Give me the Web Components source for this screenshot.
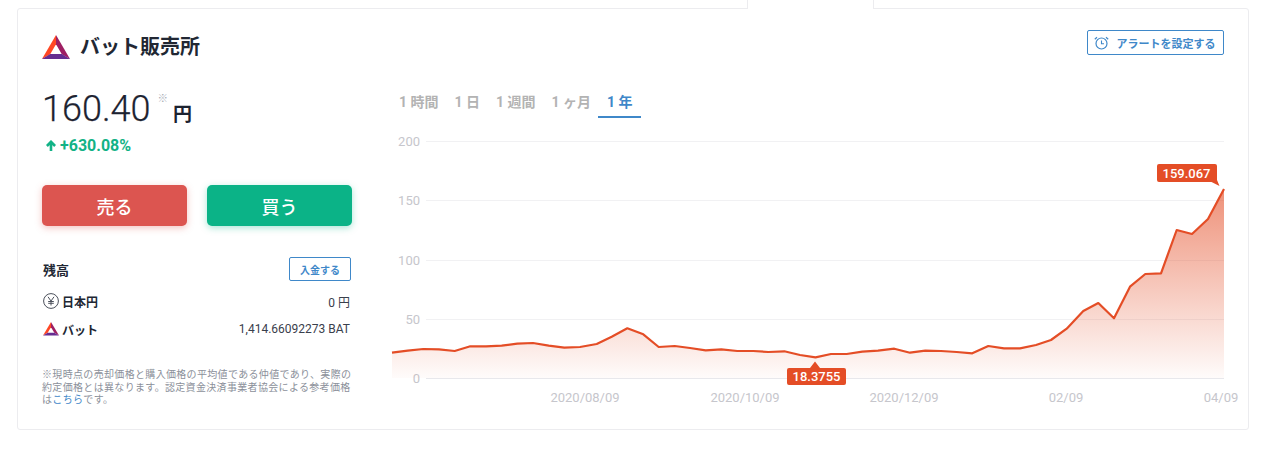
<!DOCTYPE html>
<html lang="ja">
<head>
<meta charset="utf-8">
<title>バット販売所</title>
<style>
  html, body { margin: 0; background: #fff; overflow: hidden; }
  body { font-family: Roboto, "Noto Sans CJK JP", sans-serif; color: #212733; }
</style>
</head>
<body>
<exchange-page>
  <trade-card></trade-card>
</exchange-page>

<script>
const BAT_LOGO = `
  <polygon points="14,0 0,23.6 8.2,19 14,9" fill="#ff4724"/>
  <polygon points="14,0 28,23.6 19.8,19 14,9" fill="#9e1f63"/>
  <polygon points="0,23.6 28,23.6 19.8,18.6 8.2,18.6" fill="#662d91"/>`;

class BatLogo extends HTMLElement {
  constructor() {
    super();
    this.attachShadow({mode: 'open'}).innerHTML = `
      <style>
        :host { display: block; width: var(--logo-width, 28px); height: var(--logo-height, 24px); flex: none; }
        svg { display: block; width: 100%; height: 100%; }
      </style>
      <svg viewBox="0 0 28 23.6" preserveAspectRatio="none">${BAT_LOGO}</svg>`;
  }
}

class OutlineButton extends HTMLElement {
  constructor() {
    super();
    this.attachShadow({mode: 'open'}).innerHTML = `
      <style>
        :host {
          display: flex;
          align-items: center;
          justify-content: center;
          gap: 8px;
          box-sizing: border-box;
          border: 1px solid #3f88c9;
          border-radius: 2px;
          color: #3f88c9;
          font-size: var(--button-font, 10px);
          font-weight: 700;
          background: #fff;
        }
      </style>
      <slot name="icon"></slot>
      <slot></slot>`;
  }
}

class TradeButton extends HTMLElement {
  constructor() {
    super();
    this.attachShadow({mode: 'open'}).innerHTML = `
      <style>
        :host {
          display: flex;
          align-items: center;
          justify-content: center;
          width: 145px;
          height: 41px;
          border-radius: 5px;
          color: #fff;
          font-size: 18px;
          font-weight: 500;
          background: var(--button-color);
          box-shadow: 0 2px 7px var(--button-shadow);
        }
      </style>
      <slot></slot>`;
  }
}

class BalanceRow extends HTMLElement {
  constructor() {
    super();
    this.attachShadow({mode: 'open'}).innerHTML = `
      <style>
        :host {
          display: flex;
          align-items: center;
          height: 28px;
          padding: 0 2px 0 1px;
          font-size: 12px;
        }
        .name { display: flex; align-items: center; gap: 3px; font-weight: 700; }
        .value { margin-left: auto; color: #3a404c; }
      </style>
      <span class="name"><slot name="icon"></slot><slot name="name"></slot></span>
      <span class="value"><slot name="value"></slot></span>`;
  }
}

class RangeTabs extends HTMLElement {
  constructor() {
    super();
    const items = ['1 時間', '1 日', '1 週間', '1 ヶ月', '1 年'];
    this.attachShadow({mode: 'open'}).innerHTML = `
      <style>
        :host { display: flex; height: 32px; margin-left: -.5px; font-size: 14px; font-weight: 700; color: #b3b3b3; }
        span { box-sizing: border-box; height: 32px; padding: 5px 8.5px 0; white-space: pre; margin-right: -1px; }
        .active { color: #3f88c9; border-bottom: 2px solid #3f88c9; margin-left: -.5px; padding: 5px 8px 0 9px; }
      </style>
      ${items.map((item, i) => `<span class="${i === items.length - 1 ? 'active' : ''}">${item}</span>`).join('')}`;
  }
}

class PriceChart extends HTMLElement {
  constructor() {
    super();
    const points = [
      [392,352.7],[407.7,350.7],[423.3,349],[439,349.3],[454.7,351],[470.3,346.3],[486,346.3],[501.7,345.7],
      [517.3,343.7],[533,343],[548.7,345.7],[564.3,347.7],[580,347],[596.7,344],[611.7,336.7],[627.3,328.3],
      [643.3,334.3],[658.7,347],[674.7,346],[690,348],[705.7,350.3],[721.3,349.3],[737.3,351],[753.3,351],
      [768.3,352],[784.3,351.3],[800,355],[815.5,357.3],[831,354],[846.7,354],[862.3,351.7],[878,350.7],
      [894.3,348.7],[910,352.7],[925.3,350.7],[941,351],[956.7,352],[972.3,353.3],[988.3,346],[1004,348.3],
      [1020,348.3],[1036,345],[1051,340],[1066.7,328.7],[1083.3,311],[1098.3,303],[1114,318.3],[1130,286.7],
      [1145.3,274],[1161,273.3],[1176.7,230],[1192,234],[1208,219],[1224,189]
    ];
    const line = points.map(p => p.join(',')).join(' ');
    const grid = [[200,141.5],[150,200.5],[100,260.5],[50,319.5],[0,378.5]];
    const dates = [['2020/08/09',585],['2020/10/09',745],['2020/12/09',904],['02/09',1066],['04/09',1221]];

    this.attachShadow({mode: 'open'}).innerHTML = `
      <style>
        :host { display: block; width: 833px; height: 285px; margin-top: 7px; }
        svg { display: block; overflow: visible; font-family: Roboto, sans-serif; }
        .tick { font-size: 13px; fill: #c6c6cc; }
        .callout { font-size: 13px; font-weight: 500; fill: #fff; }
      </style>
      <svg width="833" height="285" viewBox="391 125 833 285">
        <defs>
          <linearGradient id="area" x1="0" y1="189" x2="0" y2="378" gradientUnits="userSpaceOnUse">
            <stop offset="0" stop-color="#e44d26" stop-opacity=".62"/>
            <stop offset="1" stop-color="#e44d26" stop-opacity=".02"/>
          </linearGradient>
        </defs>
        ${grid.map(([label, y]) => `
          <line x1="426" x2="1224" y1="${y}" y2="${y}" stroke="${label === 0 ? '#e8e8ec' : '#f1f1f3'}"/>
          <text class="tick" x="420" y="${y + 4.5}" text-anchor="end">${label}</text>`).join('')}
        <polygon points="392,378 ${line} 1224,378" fill="url(#area)"/>
        <polyline points="${line}" fill="none" stroke="#e44d26" stroke-width="2.2" stroke-linejoin="round"/>
        ${dates.map(([label, x]) => `<text class="tick" x="${x}" y="402" text-anchor="middle">${label}</text>`).join('')}

        <path d="M1159 164h56a2 2 0 0 1 2 2v14l2.5 6-8-4h-52.500a2 2 0 0 1-2-2v-14a2 2 0 0 1 2-2z" fill="#e44d26"/>
        <text class="callout" x="1186.500" y="177.500" text-anchor="middle">159.067</text>

        <path d="M789 368h21l5-6.500 5 6.500h24a2 2 0 0 1 2 2v13a2 2 0 0 1-2 2h-55a2 2 0 0 1-2-2v-13a2 2 0 0 1 2-2z" fill="#e44d26"/>
        <text class="callout" x="816.500" y="381" text-anchor="middle">18.3755</text>
      </svg>`;
  }
}

class TradeCard extends HTMLElement {
  constructor() {
    super();
    this.attachShadow({mode: 'open'}).innerHTML = `
      <style>
        :host {
          display: block;
          box-sizing: border-box;
          width: 1232px;
          height: 422px;
          margin-left: 17px;
          padding: 21px 24px 0;
          border: 1px solid #ececef;
          border-radius: 3px;
          background: #fff;
        }
        .head { display: flex; align-items: center; height: 34px; }
        .head bat-logo { margin-top: -1px; }
        .head h1 { margin: 0 0 0 10px; font-size: 20px; font-weight: 700; color: #212733; line-height: 34px; }
        .head outline-button { --button-font: 11px; margin-left: auto; width: 137px; height: 25px; margin-top: -9px; padding-right: 2px; }
        .body { display: flex; margin-top: 22px; }
        .left { width: 310px; flex: none; }
        .right { margin-left: 39px; }
        .price { display: flex; align-items: baseline; height: 50px; margin-top: -2px; font-size: 36px; font-weight: 300; line-height: 50px; color: #1c2230; -webkit-text-stroke: .25px #1c2230; }
        .price sup { align-self: flex-start; margin: 1px 0 0 7px; font-size: 10.500px; line-height: 28px; font-weight: 400; color: #a9aeb8; -webkit-text-stroke: 0; }
        .price .unit { margin-left: 5px; font-size: 19px; font-weight: 700; -webkit-text-stroke: 0; }
        .change { display: flex; align-items: center; gap: 4px; height: 20px; margin: 1px 0 0 4px; color: #12b286; font-size: 16px; font-weight: 700; }
        .change svg { width: 10px; height: 11px; display: block; }
        .actions { display: flex; gap: 20px; margin-top: 30px; }
        .sell { --button-color: #dc5550; --button-shadow: rgba(220, 85, 80, .35); }
        .buy { --button-color: #0bb387; --button-shadow: rgba(11, 179, 135, .35); }
        .balance-head { display: flex; align-items: center; justify-content: space-between; height: 24px; margin: 31px 1px 0; }
        .balance-head b { font-size: 13px; padding-top: 1px; }
        .balance-head outline-button { width: 62px; height: 24px; }
        .rows { margin-top: 6px; }
        .yen { display: block; width: 16px; height: 16px; }
        .small { --logo-width: 16px; --logo-height: 13.500px; }
        .note {
          margin: 26px -2px 0 0;
          font-size: 10px;
          letter-spacing: .33px;
          line-height: 12.500px;
          color: #8b909a;
        }
        .note a { display: inline-block; color: #3f88c9; text-decoration: none; }
      </style>
      <div class="head">
        <bat-logo></bat-logo>
        <h1>バット販売所</h1>
        <outline-button>
          <svg slot="icon" width="15" height="14" viewBox="0 0 15 14" fill="none" stroke="#3f88c9">
            <circle cx="7.500" cy="7.500" r="5.500" stroke-width="1.200"/>
            <path d="M7.500 4.500v3.200h2.500" stroke-width="1.100"/>
            <path d="M.8 3.200 3 1.200M14.200 3.200 12 1.200" stroke-width="1.200"/>
          </svg>
          アラートを設定する
        </outline-button>
      </div>
      <div class="body">
        <div class="left">
          <div class="price">160.40<sup>※</sup><span class="unit">円</span></div>
          <div class="change">
            <svg viewBox="0 0 10 11" fill="none" stroke="#12b286" stroke-width="2.600"><path d="M5 11V2M.9 6 5 1.800 9.100 6"/></svg>
            +630.08%
          </div>
          <div class="actions">
            <trade-button class="sell">売る</trade-button>
            <trade-button class="buy">買う</trade-button>
          </div>
          <div class="balance-head"><b>残高</b><outline-button>入金する</outline-button></div>
          <div class="rows">
            <balance-row>
              <svg slot="icon" class="yen" viewBox="0 0 16 16" fill="none" stroke="#4a4f5a">
                <circle cx="8" cy="8" r="7.400" stroke-width="1"/>
                <path d="M5 3.800 8 8l3-4.200M8 8v4.500M5.200 8.500h5.600M5.200 10.300h5.600" stroke-width="1"/>
              </svg>
              <span slot="name">日本円</span>
              <span slot="value">0 円</span>
            </balance-row>
            <balance-row>
              <bat-logo slot="icon" class="small"></bat-logo>
              <span slot="name">バット</span>
              <span slot="value">1,414.66092273 BAT</span>
            </balance-row>
          </div>
          <p class="note">※現時点の売却価格と購入価格の平均値である仲値であり、実際の約定価格とは異なります。認定資金決済事業者協会による参考価格は<a>こちら</a>です。</p>
        </div>
        <div class="right">
          <range-tabs></range-tabs>
          <price-chart></price-chart>
        </div>
      </div>`;
  }
}

class ExchangePage extends HTMLElement {
  constructor() {
    super();
    this.attachShadow({mode: 'open'}).innerHTML = `
      <style>
        :host { display: block; width: 1278px; height: 451px; }
        .strip { display: flex; height: 9px; margin-bottom: -1px; position: relative; }
        .tab {
          box-sizing: border-box;
          width: 127px;
          margin-left: 747px;
          border: 1px solid #ececef;
          border-width: 0 1px;
          background: #fff;
        }
      </style>
      <div class="strip"><div class="tab"></div></div>
      <slot></slot>`;
  }
}

customElements.define('bat-logo', BatLogo);
customElements.define('outline-button', OutlineButton);
customElements.define('trade-button', TradeButton);
customElements.define('balance-row', BalanceRow);
customElements.define('range-tabs', RangeTabs);
customElements.define('price-chart', PriceChart);
customElements.define('trade-card', TradeCard);
customElements.define('exchange-page', ExchangePage);
</script>
</body>
</html>
